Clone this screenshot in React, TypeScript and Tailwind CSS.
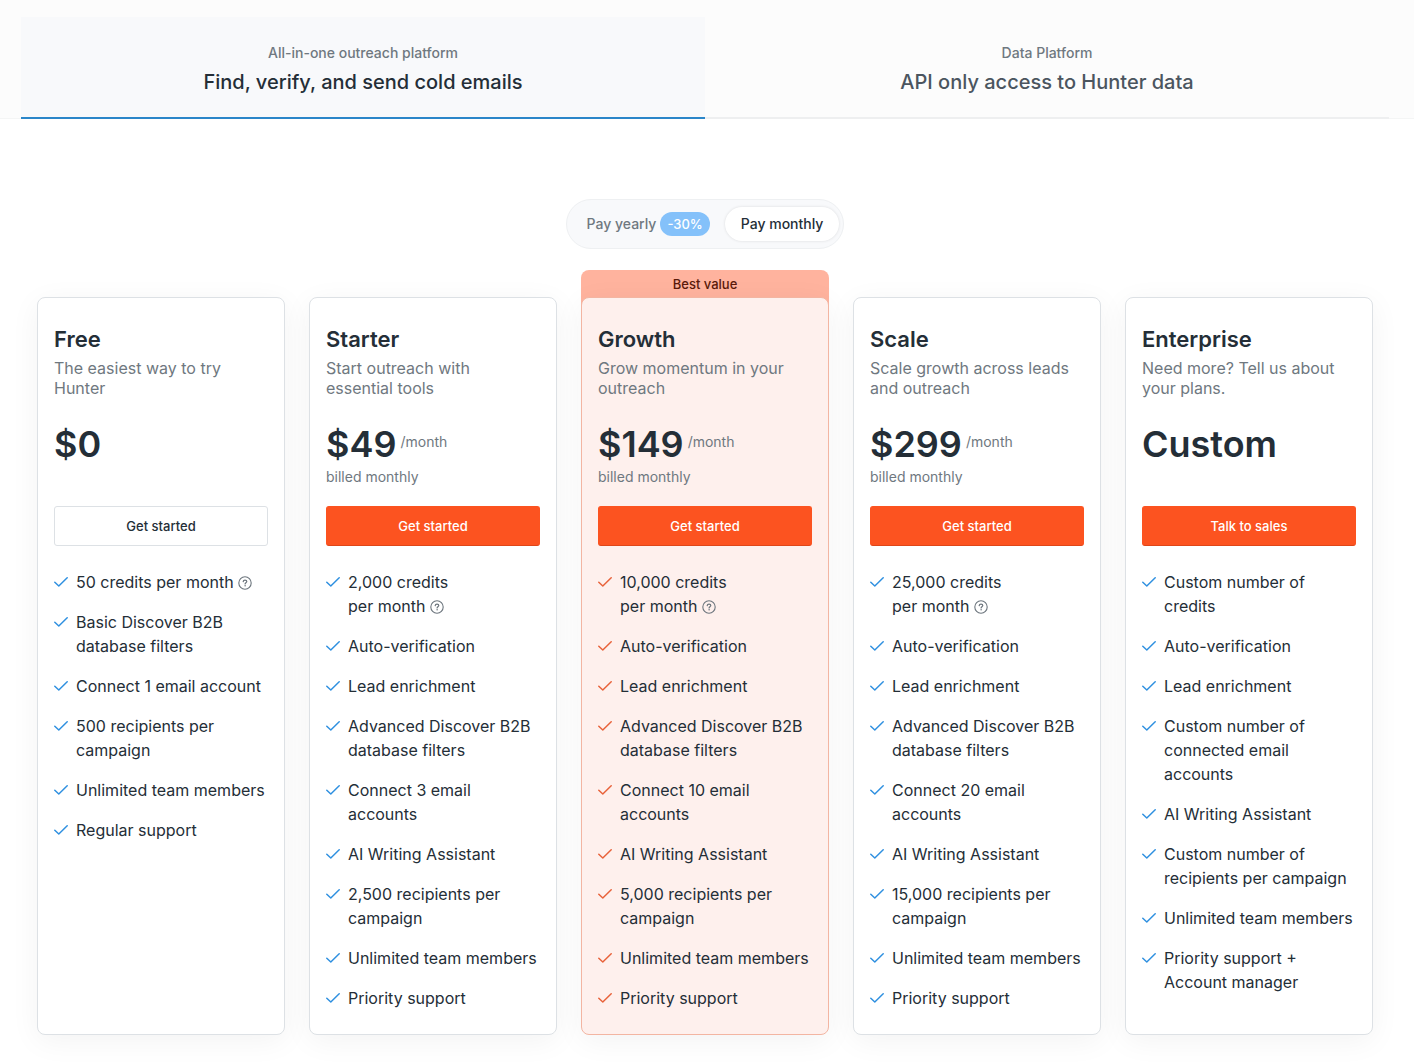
import { useState } from "react";

type Plan = {
  name: string;
  description: string;
  price: string;
  monthly: boolean;
  cta: string;
  credits: string[];
  help: boolean;
  features: string[];
};

const plans: Plan[] = [
  {
    name: "Free",
    description: "The easiest way to try Hunter",
    price: "$0",
    monthly: false,
    cta: "Get started",
    credits: ["50 credits per month"],
    help: true,
    features: [
      "Basic Discover B2B database filters",
      "Connect 1 email account",
      "500 recipients per campaign",
      "Unlimited team members",
      "Regular support",
    ],
  },
  {
    name: "Starter",
    description: "Start outreach with essential tools",
    price: "$49",
    monthly: true,
    cta: "Get started",
    credits: ["2,000 credits", "per month"],
    help: true,
    features: [
      "Auto-verification",
      "Lead enrichment",
      "Advanced Discover B2B database filters",
      "Connect 3 email accounts",
      "AI Writing Assistant",
      "2,500 recipients per campaign",
      "Unlimited team members",
      "Priority support",
    ],
  },
  {
    name: "Growth",
    description: "Grow momentum in your outreach",
    price: "$149",
    monthly: true,
    cta: "Get started",
    credits: ["10,000 credits", "per month"],
    help: true,
    features: [
      "Auto-verification",
      "Lead enrichment",
      "Advanced Discover B2B database filters",
      "Connect 10 email accounts",
      "AI Writing Assistant",
      "5,000 recipients per campaign",
      "Unlimited team members",
      "Priority support",
    ],
  },
  {
    name: "Scale",
    description: "Scale growth across leads and outreach",
    price: "$299",
    monthly: true,
    cta: "Get started",
    credits: ["25,000 credits", "per month"],
    help: true,
    features: [
      "Auto-verification",
      "Lead enrichment",
      "Advanced Discover B2B database filters",
      "Connect 20 email accounts",
      "AI Writing Assistant",
      "15,000 recipients per campaign",
      "Unlimited team members",
      "Priority support",
    ],
  },
  {
    name: "Enterprise",
    description: "Need more? Tell us about your plans.",
    price: "Custom",
    monthly: false,
    cta: "Talk to sales",
    credits: ["Custom number of", "credits"],
    help: false,
    features: [
      "Auto-verification",
      "Lead enrichment",
      "Custom number of connected email accounts",
      "AI Writing Assistant",
      "Custom number of recipients per campaign",
      "Unlimited team members",
      "Priority support + Account manager",
    ],
  },
];

const tabs = [
  { eyebrow: "All-in-one outreach platform", title: "Find, verify, and send cold emails" },
  { eyebrow: "Data Platform", title: "API only access to Hunter data" },
];

function Check({ className }: { className: string }) {
  return (
    <svg aria-hidden="true" viewBox="0 0 14 24" className={`h-6 w-[14px] shrink-0 ${className}`} fill="none" stroke="currentColor" strokeWidth="1.5" strokeLinecap="round" strokeLinejoin="round">
      <path d="M0.8 12.3 4.8 16 13.2 7.8" />
    </svg>
  );
}

function Help() {
  return (
    <button type="button" aria-label="About credits" className="inline-block align-[-2px] text-[#6c757d]">
      <svg aria-hidden="true" viewBox="0 0 14 14" className="h-[14px] w-[14px]" fill="none" stroke="currentColor" strokeWidth="1.1" strokeLinecap="round">
        <circle cx="7" cy="7" r="6.2" />
        <path d="M5.2 5.6C5.3 4.6 6 4.1 7 4.1s1.8.6 1.8 1.5c0 1.1-1.7 1.2-1.7 2.3" strokeWidth="1.2" />
        <circle cx="7.1" cy="9.8" r=".75" fill="currentColor" stroke="none" />
      </svg>
    </button>
  );
}

function PlanCard({ plan }: { plan: Plan }) {
  const best = plan.name === "Growth";
  const free = plan.name === "Free";
  const check = best ? "text-[#e8623a]" : "text-[#2f90e0]";
  return (
    <article
      className={`relative flex flex-col rounded-lg border px-4 py-6 shadow-[0_6px_30px_rgba(0,0,0,0.05)] ${
        best ? "border-[#f3b5a2] bg-[#fef0ed]" : "border-[#dde1e5] bg-white"
      }`}
    >
      {best && (
        <div className="absolute inset-x-[-1px] top-[-28px] -z-10 h-10 rounded-t-lg bg-[#ffb39e] text-center text-[13px] leading-7 font-medium text-[#5a1a0b]">
          Best value
        </div>
      )}
      <h2 className="mb-0.5 text-[22px] leading-[34px] font-semibold text-[#242e37]">{plan.name}</h2>
      <p className="min-h-10 leading-5 text-[#6f7880]">{plan.description}</p>
      <p className="mt-[22px] flex items-center gap-1">
        <strong className="text-4xl leading-12 font-semibold text-[#242e37]">{plan.price}</strong>
        {plan.monthly && <span className="pb-1 text-sm leading-5 text-[#6f7880]">/month</span>}
      </p>
      <p className="min-h-[18px] text-sm leading-[18px] text-[#6f7880]">{plan.monthly ? "billed monthly" : ""}</p>
      <button
        type="button"
        className={`mt-5 h-10 rounded-[3px] border text-[13px] leading-5 font-medium ${
          free
            ? "border-[#dde1e5] bg-white text-[#242e37]"
            : "border-[#fc5320] border-b-[#de4619] bg-[#fc5320] text-white"
        }`}
      >
        {plan.cta}
      </button>
      <ul className="mt-6 flex flex-col gap-4 text-[#242e37]">
        <li className="flex gap-2">
          <Check className={check} />
          <span>
            {plan.credits.map((line, i) => (
              <span key={line}>
                {i > 0 && <br />}
                {line}
              </span>
            ))}
            {plan.help && (
              <>
                {" "}
                <Help />
              </>
            )}
          </span>
        </li>
        {plan.features.map((feature) => (
          <li key={feature} className="flex gap-2">
            <Check className={check} />
            <span>{feature}</span>
          </li>
        ))}
      </ul>
    </article>
  );
}

export default function App() {
  const [tab, setTab] = useState(0);
  const [billing, setBilling] = useState("monthly");
  return (
    <main className="isolate min-h-screen bg-white pb-7 font-['Inter',sans-serif] text-base">
      <header className="border-b border-[#f4f5f5] bg-[#fcfcfc] pt-[17px] pr-[25px] pl-[21px]">
        <div role="tablist" aria-label="Platform" className="-mb-px grid grid-cols-2">
          {tabs.map((item, i) => (
            <button
              key={item.title}
              type="button"
              role="tab"
              aria-selected={tab === i}
              onClick={() => setTab(i)}
              className={`flex flex-col items-center border-b-2 pt-[26px] pb-[19px] font-medium ${
                tab === i
                  ? "border-[#2b86c9] bg-[#f8f9fb] text-[#242e37]"
                  : "border-[#eeeff0] text-[#4b555f]"
              }`}
            >
              <span className="text-sm leading-5 text-[#6f7880]">{item.eyebrow}</span>
              <span className="pt-1 text-xl leading-[31px]">{item.title}</span>
            </button>
          ))}
        </div>
      </header>

      <div className="pt-20 pr-[41px] pl-[37px]">
        <div
          role="radiogroup"
          aria-label="Billing period"
          className="mx-auto flex w-fit items-center rounded-full border border-[#eef0f2] bg-[#f8f9fb] py-[7px] pr-1 pl-5 text-sm font-medium"
        >
          <label className={`relative flex h-[34px] cursor-pointer items-center gap-1 rounded-full ${billing === "yearly" ? "text-[#242e37]" : "text-[#6f7880]"}`}>
            <input type="radio" name="billing" value="yearly" checked={billing === "yearly"} onChange={() => setBilling("yearly")} className="absolute inset-0 cursor-pointer appearance-none" />
            Pay yearly
            <span className="flex h-6 items-center rounded-full bg-[#84c1fa] px-[7px] text-[13px] text-white">-30%</span>
          </label>
          <label className="relative ml-[15px] flex h-[34px] cursor-pointer items-center rounded-full bg-white px-4 text-[#242e37] shadow-[0_0_3px_rgba(0,0,0,0.12)]">
            <input type="radio" name="billing" value="monthly" checked={billing === "monthly"} onChange={() => setBilling("monthly")} className="absolute inset-0 cursor-pointer appearance-none" />
            Pay monthly
          </label>
        </div>

        <section aria-label="Plans" className="mt-12 grid grid-cols-5 gap-6">
          {plans.map((plan) => (
            <PlanCard key={plan.name} plan={plan} />
          ))}
        </section>
      </div>
    </main>
  );
}
